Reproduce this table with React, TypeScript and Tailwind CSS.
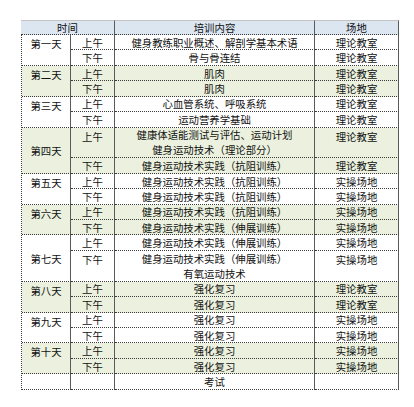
import React from "react";

type Slot = {
  half: string;
  content: string[];
  venue: string;
  span?: number;
};

type Day = {
  label: string;
  green: boolean;
  center?: boolean;
  slots: Slot[];
};

const days: Day[] = [
  {
    label: "第一天",
    green: false,
    slots: [
      { half: "上午", content: ["健身教练职业概述、解剖学基本术语"], venue: "理论教室" },
      { half: "下午", content: ["骨与骨连结"], venue: "理论教室" },
    ],
  },
  {
    label: "第二天",
    green: true,
    slots: [
      { half: "上午", content: ["肌肉"], venue: "理论教室" },
      { half: "下午", content: ["肌肉"], venue: "理论教室" },
    ],
  },
  {
    label: "第三天",
    green: false,
    slots: [
      { half: "上午", content: ["心血管系统、呼吸系统"], venue: "理论教室" },
      { half: "下午", content: ["运动营养学基础"], venue: "理论教室" },
    ],
  },
  {
    label: "第四天",
    green: true,
    center: true,
    slots: [
      {
        half: "上午",
        content: ["健康体适能测试与评估、运动计划", "健身运动技术（理论部分）"],
        venue: "理论教室",
        span: 2,
      },
      { half: "下午", content: ["健身运动技术实践（抗阻训练）"], venue: "理论教室" },
    ],
  },
  {
    label: "第五天",
    green: false,
    slots: [
      { half: "上午", content: ["健身运动技术实践（抗阻训练）"], venue: "实操场地" },
      { half: "下午", content: ["健身运动技术实践（抗阻训练）"], venue: "实操场地" },
    ],
  },
  {
    label: "第六天",
    green: true,
    slots: [
      { half: "上午", content: ["健身运动技术实践（抗阻训练）"], venue: "实操场地" },
      { half: "下午", content: ["健身运动技术实践（伸展训练）"], venue: "实操场地" },
    ],
  },
  {
    label: "第七天",
    green: false,
    center: true,
    slots: [
      { half: "上午", content: ["健身运动技术实践（伸展训练）"], venue: "实操场地" },
      {
        half: "下午",
        content: ["健身运动技术实践（伸展训练）", "有氧运动技术"],
        venue: "实操场地",
        span: 2,
      },
    ],
  },
  {
    label: "第八天",
    green: true,
    slots: [
      { half: "上午", content: ["强化复习"], venue: "理论教室" },
      { half: "下午", content: ["强化复习"], venue: "理论教室" },
    ],
  },
  {
    label: "第九天",
    green: false,
    slots: [
      { half: "上午", content: ["强化复习"], venue: "实操场地" },
      { half: "下午", content: ["强化复习"], venue: "实操场地" },
    ],
  },
  {
    label: "第十天",
    green: true,
    slots: [
      { half: "上午", content: ["强化复习"], venue: "实操场地" },
      { half: "下午", content: ["强化复习"], venue: "实操场地" },
    ],
  },
];

const spanClass: Record<number, string> = {
  1: "row-span-1",
  2: "row-span-2",
  3: "row-span-3",
  4: "row-span-4",
};

// dotted row lines, solid column lines
const cell =
  "border-b border-r border-dotted border-[#3a3a3a] [border-right-style:solid] [border-right-color:#5a5a5a]";

export default function App() {
  return (
    <div className="w-[414px] h-[407px] bg-white pt-[20px] pl-[21px] font-['Noto_Sans_CJK_SC',sans-serif] text-[10.4px] leading-[15px] text-[#111]">
      <div className="grid w-[377px] grid-cols-[49px_44px_200px_84px] grid-rows-[15px] auto-rows-[15.43px] border-l border-dotted border-[#3a3a3a]">
        {/* header */}
        <div className="col-span-2 flex items-center justify-center bg-[#dce6f1] border-t border-b border-r border-[#c4c4c4] [border-bottom-style:dotted] [border-bottom-color:#3a3a3a] [border-right-color:#5a5a5a] -ml-px">
          时间
        </div>
        <div className="flex items-center justify-center bg-[#dce6f1] border-t border-b border-r border-[#c4c4c4] [border-bottom-style:dotted] [border-bottom-color:#3a3a3a] [border-right-color:#5a5a5a]">
          培训内容
        </div>
        <div className="flex items-center justify-center bg-[#dce6f1] border-t border-b border-r border-[#c4c4c4] [border-bottom-style:dotted] [border-bottom-color:#3a3a3a] [border-right-color:#5a5a5a]">
          场地
        </div>

        {days.map((day) => {
          const bg = day.green ? "bg-[#ebf1de]" : "bg-white";
          const total = day.slots.reduce((n, s) => n + (s.span ?? 1), 0);
          return (
            <React.Fragment key={day.label}>
              <div
                className={`col-start-1 ${spanClass[total]} ${bg} ${cell} flex justify-center ${
                  day.center ? "items-center" : "items-start pt-px"
                }`}
              >
                {day.label}
              </div>
              {day.slots.map((slot, i) => (
                <React.Fragment key={i}>
                  <div
                    className={`col-start-2 ${spanClass[slot.span ?? 1]} ${bg} ${cell} flex ${
                      slot.span ? "items-start pt-px" : "items-center"
                    } justify-center`}
                  >
                    {slot.half}
                  </div>
                  <div
                    className={`col-start-3 ${spanClass[slot.span ?? 1]} ${bg} ${cell} flex flex-col items-center justify-center`}
                  >
                    {slot.content.map((line) => (
                      <span key={line} className="leading-[15px] whitespace-nowrap">
                        {line}
                      </span>
                    ))}
                  </div>
                  <div
                    className={`col-start-4 ${spanClass[slot.span ?? 1]} ${bg} ${cell} flex ${
                      slot.span ? "items-start pt-px" : "items-center"
                    } justify-center`}
                  >
                    {slot.venue}
                  </div>
                </React.Fragment>
              ))}
            </React.Fragment>
          );
        })}

        {/* exam row */}
        <div className={`col-start-1 bg-white ${cell}`} />
        <div className={`col-start-2 bg-white ${cell}`} />
        <div className={`col-start-3 bg-white ${cell} flex items-center justify-center`}>
          考试
        </div>
        <div className={`col-start-4 bg-white ${cell}`} />
      </div>
    </div>
  );
}
